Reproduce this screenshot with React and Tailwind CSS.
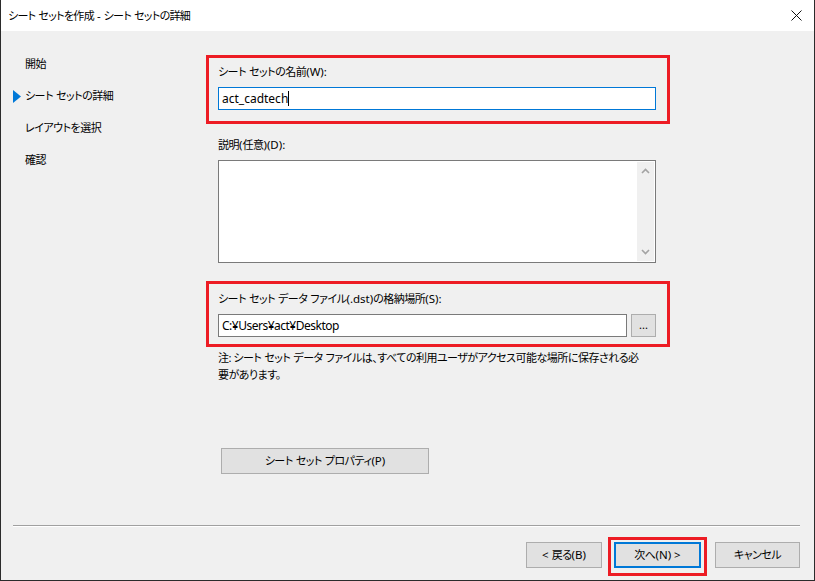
import React from 'react';

const jp = 'text-[11px] tracking-[-0.5px] leading-4 text-black';

// latin runs inside japanese labels keep Segoe-like spacing
function L({ children }) {
  return <span className="text-[11.5px] tracking-normal">{children}</span>;
}

function NavItem({ active, children }) {
  return (
    <div className="flex items-center h-4">
      <div className="w-3 flex items-center">
        {active && (
          <svg width="8" height="13" viewBox="0 0 8 13">
            <path d="M0 0 L8 6.5 L0 13 Z" fill="#0078d7" />
          </svg>
        )}
      </div>
      <span className={jp}>{children}</span>
    </div>
  );
}

function Button({ className = '', children }) {
  return (
    <button
      className={
        'h-[26px] bg-[#e1e1e1] border border-[#adadad] flex items-center justify-center ' + jp + ' ' + className
      }
    >
      <span>{children}</span>
    </button>
  );
}

export default function App() {
  return (
    <div className="w-[815px] h-[581px] flex flex-col bg-[#f0f0f0] border-x border-b border-[#2b2b2b] overflow-hidden font-['Noto_Sans','Noto_Sans_CJK_JP',sans-serif] [font-feature-settings:'palt']">
      {/* Title bar */}
      <div className="h-[31px] bg-white flex items-center justify-between pl-[7px] pr-[12px] shrink-0">
        <span className="text-[11px] tracking-[-0.7px] leading-4 text-black">
          シート<L> </L>セットを作成<L> - </L>シート<L> </L>セットの詳細
        </span>
        <svg width="11" height="11" viewBox="0 0 11 11">
          <path d="M0.5 0.5 L10.5 10.5 M10.5 0.5 L0.5 10.5" stroke="#111" strokeWidth="1" />
        </svg>
      </div>

      {/* Main */}
      <div className="flex-1 flex">
        {/* Wizard steps */}
        <div className="w-[205px] pl-[12px] pt-[25px] flex flex-col gap-4">
          <NavItem>開始</NavItem>
          <NavItem active>
            シート<L> </L>セットの詳細
          </NavItem>
          <NavItem>レイアウトを選択</NavItem>
          <NavItem>確認</NavItem>
        </div>

        {/* Form */}
        <div className="pt-[24px] flex flex-col">
          <div className="w-[464px] border-[3px] border-[#ed1c24] pl-[9px] pr-[11px] pt-[6px] pb-[11px] flex flex-col gap-[7px]">
            <span className={jp}>
              シート<L> </L>セットの名前<L>(W):</L>
            </span>
            <div className="h-[23px] bg-white border border-[#0078d7] flex items-center pl-[3px]">
              <span className="text-[12px] leading-4 text-black">act_cadtech</span>
              <span className="w-px h-[15px] bg-black" />
            </div>
          </div>

          <div className="pl-[12px] pt-[13px] flex flex-col gap-[7px]">
            <span className={jp}>
              説明<L>(</L>任意<L>)(D):</L>
            </span>
            <div className="w-[438px] h-[103px] bg-white border border-[#7a7a7a] flex p-px">
              <div className="flex-1" />
              <div className="w-[17px] bg-[#f0f0f0] flex flex-col items-center justify-between py-[6px]">
                <svg width="9" height="6" viewBox="0 0 9 6">
                  <path d="M1 5 L4.5 1.5 L8 5" stroke="#a3a3a3" strokeWidth="1.6" fill="none" />
                </svg>
                <svg width="9" height="6" viewBox="0 0 9 6">
                  <path d="M1 1 L4.5 4.5 L8 1" stroke="#a3a3a3" strokeWidth="1.6" fill="none" />
                </svg>
              </div>
            </div>
          </div>

          <div className="mt-[18px] w-[464px] border-[3px] border-[#ed1c24] pl-[9px] pr-[11px] pt-[7px] pb-[7px] flex flex-col gap-[7px]">
            <span className={jp}>
              シート<L> </L>セット<L> </L>データ<L> </L>ファイル<L>(.dst)</L>の格納場所<L>(S):</L>
            </span>
            <div className="flex gap-[4px]">
              <div className="flex-1 h-[23px] bg-white border border-[#7a7a7a] flex items-center pl-[3px]">
                <span className="text-[12px] tracking-[-0.5px] leading-4 text-black">C:¥Users¥act¥Desktop</span>
              </div>
              <button className="w-[25px] h-[23px] bg-[#e1e1e1] border border-[#adadad] text-[11px] leading-3 text-black flex items-end justify-center pb-[5px]">
                ...
              </button>
            </div>
          </div>

          <p className="pl-[12px] pt-[2px] text-[11px] tracking-[-0.5px] leading-[17px] text-black">
            注: シート<L> </L>セット<L> </L>データ<L> </L>ファイルは、すべての利用ユーザがアクセス可能な場所に保存される必
            <br />
            要があります。
          </p>

          <div className="pl-[15px] pt-[65px]">
            <Button className="w-[208px]">
              シート<L> </L>セット<L> </L>プロパティ<L>(P)</L>
            </Button>
          </div>
        </div>
      </div>

      {/* Footer */}
      <div className="shrink-0 pl-[12px] pr-[14px]">
        <div className="h-px bg-[#a0a0a0]" />
        <div className="h-px bg-white" />
      </div>
      <div className="shrink-0 h-[53px] pt-[10px] pr-[14px] flex justify-end items-start">
        <Button className="w-[76px] mt-[5px]">
          <L>&lt; </L>戻る<L>(B)</L>
        </Button>
        <div className="ml-[6px] w-[99px] h-[39px] border-[3px] border-[#ed1c24] px-[3px] pt-[2px]">
          <button className={'w-full h-[26px] bg-[#e1e1e1] border-2 border-[#0078d7] flex items-center justify-center ' + jp}>
            <span>
              次へ<L>(N) &gt;</L>
            </span>
          </button>
        </div>
        <Button className="ml-[8px] w-[85px] mt-[5px]">キャンセル</Button>
      </div>
    </div>
  );
}
